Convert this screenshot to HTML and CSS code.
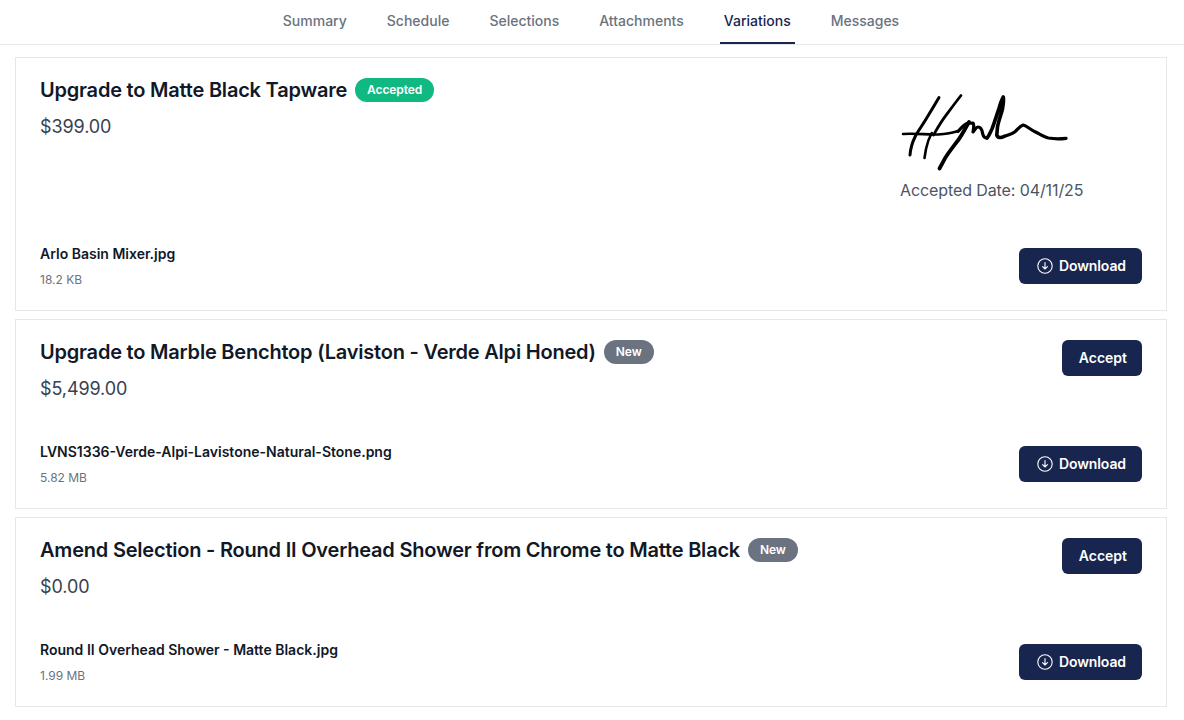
FILE: index.html
```html
<!DOCTYPE html>
<html lang="en">
  <head>
    <meta charset="UTF-8" />
    <title>Variations</title>
    <link rel="stylesheet" href="styles.css">
  </head>
  <body>

    <!-- Tabs -->
    <div class="tabs">
      <a class="tab">Summary</a>
      <a class="tab">Schedule</a>
      <a class="tab">Selections</a>
      <a class="tab">Attachments</a>
      <a class="tab active">Variations</a>
      <a class="tab">Messages</a>
    </div>

    <div class="list">

      <!-- Accepted variation -->
      <div class="card card-accepted">
        <div class="card-top">
          <div>
            <div class="title-row">
              <h2>Upgrade to Matte Black Tapware</h2>
              <span class="badge badge-green">Accepted</span>
            </div>
            <div class="price">$399.00</div>
          </div>
          <div class="signature">
            <svg class="sig-img" width="170" height="80" viewBox="900 93 170 80" fill="none" stroke="#000" stroke-width="3" stroke-linecap="round" stroke-linejoin="round">
              <path stroke-width="2.6" d="M903 134 C915 133 928 135 938 134.5 C945 134 952 133 958 131"/>
              <path stroke-width="3" d="M939 97.5 C934 106 931 111 926.7 118 C922 126 918 131 915 137 C912 143 910.5 149 910 155"/>
              <path stroke-width="2.6" d="M931.7 133 C929 138 927 144 926 149 L924.5 158"/>
              <path stroke-width="2.8" d="M961 95.5 C955 103 950 110 945 116.7 C941 122 937 129 933.5 135"/>
              <path stroke-width="3.8" d="M969 122 C965 129 962 135 958.3 140 C953 147 949 152 945 158.3 L939.5 168.5"/>
              <path stroke-width="3.2" d="M958 131.5 C961 128 964 125 967 123.5 L973 123 C974.5 125 973.5 129 973 132 C975 130 976 127 978 127 C981 127 982 130 982.5 133 C983 136 984 138 987 138"/>
              <path stroke-width="3.6" d="M987 138 C989 136 990 133 992 129 C995 121 997 114 998.5 110 C1000 105 1001 101 1003.3 97 C1004 101 1003 105 1002.5 109 C1001 115 998.5 121 997.5 127 L996.8 135 C997.5 138 1001 138 1004 136.5"/>
              <path stroke-width="3.2" d="M1004 136.5 C1008 135 1012 134 1015 131.7 C1018 129 1020 126 1023.3 125 C1027 126 1031 130 1035 131.7 C1040 134 1044 137 1048.5 138 C1054 139 1060 139 1066 138.3"/>
            </svg>
            <div class="accepted-date">Accepted Date: 04/11/25</div>
          </div>
        </div>
        <div class="file-row">
          <div>
            <div class="file-name">Arlo Basin Mixer.jpg</div>
            <div class="file-size">18.2 KB</div>
          </div>
          <button class="btn btn-download">
            <svg width="16" height="16" viewBox="0 0 16 16" fill="none" stroke="#fff" stroke-width="1.1" stroke-linecap="round" stroke-linejoin="round"><circle cx="8" cy="8" r="7.2"/><path d="M8 4.6v6.4M5.6 8.7 8 11l2.4-2.3"/></svg>
            Download
          </button>
        </div>
      </div>

      <!-- New variations -->
      <div class="card">
        <div class="card-top">
          <div>
            <div class="title-row">
              <h2>Upgrade to Marble Benchtop (Laviston - Verde Alpi Honed)</h2>
              <span class="badge badge-grey">New</span>
            </div>
            <div class="price">$5,499.00</div>
          </div>
          <button class="btn btn-accept">Accept</button>
        </div>
        <div class="file-row">
          <div>
            <div class="file-name">LVNS1336-Verde-Alpi-Lavistone-Natural-Stone.png</div>
            <div class="file-size">5.82 MB</div>
          </div>
          <button class="btn btn-download">
            <svg width="16" height="16" viewBox="0 0 16 16" fill="none" stroke="#fff" stroke-width="1.1" stroke-linecap="round" stroke-linejoin="round"><circle cx="8" cy="8" r="7.2"/><path d="M8 4.6v6.4M5.6 8.7 8 11l2.4-2.3"/></svg>
            Download
          </button>
        </div>
      </div>

      <div class="card">
        <div class="card-top">
          <div>
            <div class="title-row">
              <h2>Amend Selection - Round II Overhead Shower from Chrome to Matte Black</h2>
              <span class="badge badge-grey">New</span>
            </div>
            <div class="price">$0.00</div>
          </div>
          <button class="btn btn-accept">Accept</button>
        </div>
        <div class="file-row">
          <div>
            <div class="file-name">Round II Overhead Shower - Matte Black.jpg</div>
            <div class="file-size">1.99 MB</div>
          </div>
          <button class="btn btn-download">
            <svg width="16" height="16" viewBox="0 0 16 16" fill="none" stroke="#fff" stroke-width="1.1" stroke-linecap="round" stroke-linejoin="round"><circle cx="8" cy="8" r="7.2"/><path d="M8 4.6v6.4M5.6 8.7 8 11l2.4-2.3"/></svg>
            Download
          </button>
        </div>
      </div>

    </div>

  </body>
</html>
```

FILE: styles.css
```css
* {
  box-sizing: border-box;
}

html,
body {
  height: 720px;
  overflow: hidden;
}

body {
  margin: 0;
  font-family: Inter, 'Liberation Sans', sans-serif;
  background-color: #fff;
  color: #111827;
}

.tabs {
  display: flex;
  justify-content: center;
  gap: 32px;
  height: 45px;
  border-bottom: 1px solid #e5e7eb;
  padding-right: 2px;
}

.tab {
  padding: 0 4px;
  height: 44px;
  line-height: 42px;
  font-size: 14px;
  font-weight: 500;
  color: #6b7280;
}

.tab.active {
  color: #18264f;
  border-bottom: 2px solid #18264f;
}

.list {
  display: flex;
  flex-direction: column;
  gap: 8px;
  padding: 12px 17px 0 15px;
}

.card {
  height: 190px;
  border: 1px solid #e5e7eb;
  padding: 20px 24px 22px;
  display: flex;
  flex-direction: column;
  justify-content: space-between;
}

.card-accepted {
  height: 254px;
}

.card-top {
  display: flex;
  justify-content: space-between;
  align-items: flex-start;
}

.title-row {
  display: flex;
  align-items: center;
  gap: 8px;
  height: 24px;
}

.title-row h2 {
  margin: 0;
  font-size: 20px;
  font-weight: 600;
  line-height: 24px;
  letter-spacing: -0.21px;
}

.badge {
  color: #fff;
  font-size: 12px;
  font-weight: 600;
  line-height: 16px;
  letter-spacing: -0.1px;
  padding: 4px 12px;
  border-radius: 12px;
}

.badge-green {
  background-color: #10b981;
}

.badge-grey {
  background-color: #6b7280;
}

.price {
  margin-top: 13px;
  font-size: 18px;
  line-height: 24px;
  letter-spacing: -0.1px;
  color: #374151;
}

.signature {
  width: 242px;
  margin-top: 15px;
}

.sig-img {
  display: block;
}

.accepted-date {
  margin-top: 5px;
  font-size: 16px;
  line-height: 24px;
  letter-spacing: -0.1px;
  color: #4b5563;
}

.file-row {
  display: flex;
  justify-content: space-between;
  align-items: center;
}

.file-name {
  font-size: 14px;
  font-weight: 600;
  line-height: 20px;
}

.file-size {
  margin-top: 8px;
  font-size: 12px;
  line-height: 16px;
  color: #6b7280;
}

.btn {
  display: flex;
  align-items: center;
  height: 36px;
  padding: 0 15px 2px 17px;
  background-color: #18264f;
  border: none;
  border-radius: 6px;
  color: #fff;
  font-family: inherit;
  font-size: 14px;
  font-weight: 600;
}

.btn-download {
  gap: 6px;
  padding-left: 18px;
  padding-right: 16px;
  letter-spacing: -0.1px;
}

.btn-download svg {
  margin-top: 2px;
}
```
